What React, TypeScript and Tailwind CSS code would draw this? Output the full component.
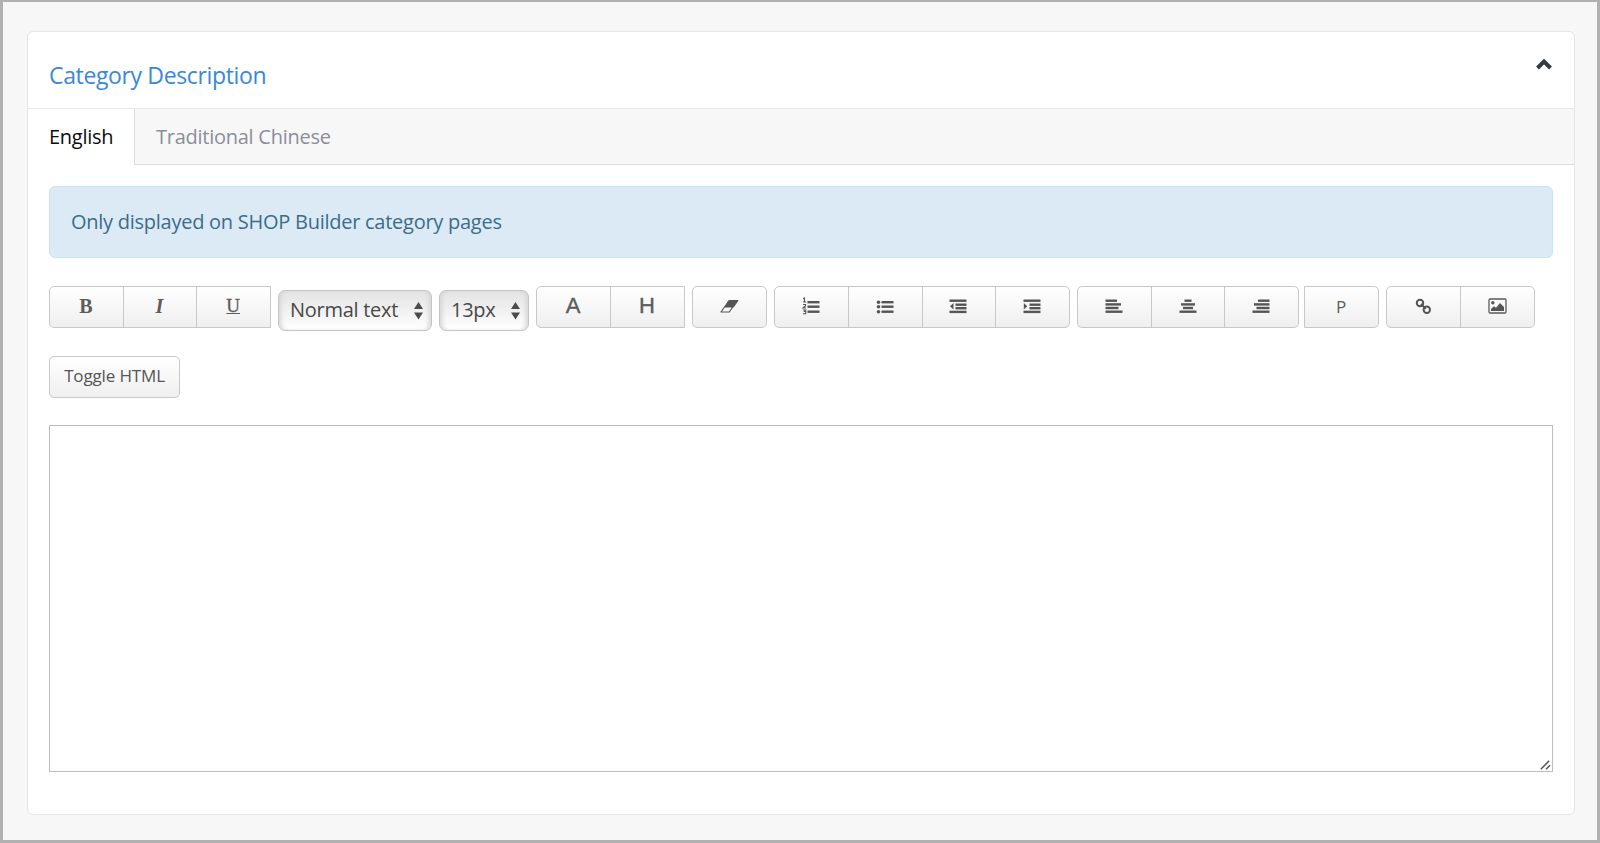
import React from "react";

type Round = "both" | "left" | "right";

const roundClass: Record<Round, string> = {
  both: "rounded-[5px]",
  left: "rounded-l-[5px]",
  right: "rounded-r-[5px]",
};

function Group({ children, className = "", round = "both" }: { children: React.ReactNode; className?: string; round?: Round }) {
  return (
    <div
      className={`flex h-[42px] shrink-0 divide-x divide-[#c8c8c8] overflow-hidden border border-[#c8c8c8] bg-linear-to-b from-white to-[#efefef] ${roundClass[round]} ${className}`}
    >
      {children}
    </div>
  );
}

function Tool({ children, label }: { children: React.ReactNode; label: string }) {
  return (
    <button type="button" aria-label={label} className="flex min-w-0 flex-1 items-center justify-center pr-px pb-[2px] text-[#5c5c5c]">
      {children}
    </button>
  );
}

function Bars({ rows, children }: { rows: [number, number, number][]; children?: React.ReactNode }) {
  return (
    <svg width="18" height="18" viewBox="0 0 18 18" fill="#555">
      {rows.map(([x, y, w]) => (
        <rect key={y} x={x} y={y} width={w} height="2.4" />
      ))}
      {children}
    </svg>
  );
}

function Select({ text, className }: { text: string; className: string }) {
  return (
    <div
      className={`mt-[4px] flex h-[41px] shrink-0 items-center justify-between rounded-[7px] border border-[#c4c4c4] bg-linear-to-b from-[#e3e3e3] to-white pr-[8px] pl-[11px] shadow-[inset_4px_0_4px_-2px_#d4d4d4,inset_-4px_0_4px_-2px_#d4d4d4] ${className}`}
    >
      <span className="pb-px text-[20px] leading-none tracking-[-0.28px] whitespace-nowrap text-[#484848]">{text}</span>
      <svg width="9" height="18" viewBox="0 0 9 18" fill="#4c4c4c">
        <path d="M4.500 0 9 7H0zM0 10.500h9L4.500 17.500z" />
      </svg>
    </div>
  );
}

export default function App() {
  return (
    <div className="flex h-[843px] w-[1600px] flex-col border-[3px] border-t-[2px] border-[#b1b1b1] bg-[#f7f7f7] pt-[29px] pr-[22px] pb-[25px] pl-[24px] font-['Open_Sans',sans-serif]">
      <section className="flex flex-1 flex-col rounded-[6px] border border-[#e6e6e6] bg-white">
        <header className="flex h-[77px] shrink-0 justify-between border-b border-[#e8e8e8] pl-[21px]">
          <h2 className="pt-[27px] text-[23px] leading-[32px] tracking-[-0.36px] text-[#3988da]">Category Description</h2>
          <svg className="mt-[26px] mr-[22px]" width="16" height="12" viewBox="0 0 16 12" fill="none" stroke="#343b44" strokeWidth="4">
            <path d="M1.500 10 8 3.500 14.500 10" />
          </svg>
        </header>
        <nav className="flex h-[56px] shrink-0 text-[20px] leading-[56px] tracking-[-0.26px]">
          <div className="w-[107px] shrink-0 border-r border-[#dcdcdc] pl-[21px] text-[#0b0b10]">English</div>
          <div className="flex-1 border-b border-[#dcdcdc] bg-[#f7f7f7] pl-[21px] text-[#8c8d9b]">Traditional Chinese</div>
        </nav>
        <div className="flex flex-1 flex-col px-[21px] pt-[21px]">
          <div className="flex h-[72px] shrink-0 items-center rounded-[6px] border border-[#c5e7f0] bg-[#dceaf5] pl-[21px] text-[20px] tracking-[-0.26px] text-[#3a6d8a]">
            Only displayed on SHOP Builder category pages
          </div>
          <div className="mt-[28px] flex h-[46px] shrink-0 items-start">
            <Group className="w-[222px]" round="left">
              <Tool label="Bold"><span className="font-['Liberation_Serif',serif] text-[20px] leading-none font-bold">B</span></Tool>
              <Tool label="Italic"><span className="font-['Liberation_Serif',serif] text-[20px] leading-none font-bold italic">I</span></Tool>
              <Tool label="Underline"><span className="pb-px font-['Liberation_Serif',serif] text-[19px] leading-none underline [-webkit-text-stroke:0.3px_#5c5c5c]">U</span></Tool>
            </Group>
            <Select text="Normal text" className="ml-[7px] w-[154px]" />
            <Select text="13px" className="ml-[7px] w-[90px]" />
            <Group className="ml-[7px] w-[149px]" round="left">
              <Tool label="Font color"><span className="font-['Liberation_Sans',sans-serif] text-[22px] leading-none [-webkit-text-stroke:0.4px_#5c5c5c]">A</span></Tool>
              <Tool label="Highlight"><span className="font-['Liberation_Sans',sans-serif] text-[22px] leading-none [-webkit-text-stroke:0.4px_#5c5c5c]">H</span></Tool>
            </Group>
            <Group className="ml-[7px] w-[75px]">
              <Tool label="Clear formatting">
                <svg width="19" height="13" viewBox="0 0 19 13">
                  <path d="M8.800 .5H18L13.500 7H4.600z" fill="#555" stroke="#555" strokeLinejoin="round" />
                  <path d="M4.600 7h8.200L9.300 12H1z" fill="#fafafa" stroke="#555" strokeWidth="1.200" strokeLinejoin="round" />
                </svg>
              </Tool>
            </Group>
            <Group className="ml-[7px] w-[296px]">
              <Tool label="Ordered list">
                <Bars rows={[[5.500, 4, 12], [5.500, 8.500, 12], [5.500, 13.500, 12]]}>
                  <g fill="none" stroke="#555" strokeWidth="1.100">
                    <path d="M1.200 1.800 2.500 1v4M1 5h3M1 7.500h2.500v1.500L1 11h3M1 13h2.800L2.500 14.500h1.200v2.200H1" />
                  </g>
                </Bars>
              </Tool>
              <Tool label="Unordered list">
                <Bars rows={[[5.500, 4, 12], [5.500, 8.500, 12], [5.500, 13.500, 12]]}>
                  <circle cx="2.500" cy="5.200" r="1.800" />
                  <circle cx="2.500" cy="9.700" r="1.800" />
                  <circle cx="2.500" cy="14.700" r="1.800" />
                </Bars>
              </Tool>
              <Tool label="Outdent">
                <Bars rows={[[0.5, 2.500, 17], [6.500, 6.500, 11], [6.500, 10, 11], [0.5, 13.700, 17]]}>
                  <path d="M4.500 6v6.500L1 9.250z" />
                </Bars>
              </Tool>
              <Tool label="Indent">
                <Bars rows={[[0.5, 2.500, 17], [6.500, 6.500, 11], [6.500, 10, 11], [0.5, 13.700, 17]]}>
                  <path d="M.8 6v6.500l3.500-3.250z" />
                </Bars>
              </Tool>
            </Group>
            <Group className="ml-[7px] w-[222px]">
              <Tool label="Align left"><Bars rows={[[0.5, 2.500, 11.500], [0.5, 6.200, 15.500], [0.5, 9.800, 13], [0.5, 13.500, 17]]} /></Tool>
              <Tool label="Align center"><Bars rows={[[5.500, 2.500, 7], [2, 6.200, 14], [4, 9.800, 10], [0.5, 13.500, 17]]} /></Tool>
              <Tool label="Align right"><Bars rows={[[6, 2.500, 11.500], [2, 6.200, 15.500], [4.500, 9.800, 13], [0.5, 13.500, 17]]} /></Tool>
            </Group>
            <Group className="ml-[5px] w-[75px]" round="right">
              <Tool label="Paragraph"><span className="text-[17px] leading-none">P</span></Tool>
            </Group>
            <Group className="ml-[7px] w-[149px]">
              <Tool label="Link">
                <svg width="17" height="17" viewBox="0 0 17 17" fill="none" stroke="#555" strokeWidth="2">
                  <circle cx="5" cy="5" r="3.200" />
                  <circle cx="11.800" cy="11.800" r="3.200" />
                  <path d="m6 6 4.800 4.800" />
                </svg>
              </Tool>
              <Tool label="Image">
                <svg width="19" height="16" viewBox="0 0 19 16">
                  <rect x="1" y="1" width="17" height="14" rx="1.200" fill="none" stroke="#5a5a5a" strokeWidth="1.300" />
                  <circle cx="4.800" cy="4.800" r="1.700" fill="#555" />
                  <path d="M3 13v-2l3-2.700 2 1.500L12 5l1.500 1.500L16 9v4z" fill="#555" />
                </svg>
              </Tool>
            </Group>
          </div>
          <div className="mt-[24px] flex">
            <button type="button" className="h-[42px] w-[131px] rounded-[5px] border border-[#c8c8c8] bg-linear-to-b from-white to-[#efefef] pb-[2px] text-[17px] tracking-[-0.15px] text-[#555]">
              Toggle HTML
            </button>
          </div>
          <div className="mt-[27px] flex h-[347px] shrink-0 items-end justify-end border border-[#bdbdbd] bg-white">
            <svg className="mr-px mb-px" width="11" height="10" viewBox="0 0 11 10" stroke="#555" strokeWidth="1.500">
              <path d="M.8 9.200 9.200.8M6 9.200l4-4" />
            </svg>
          </div>
        </div>
      </section>
    </div>
  );
}
